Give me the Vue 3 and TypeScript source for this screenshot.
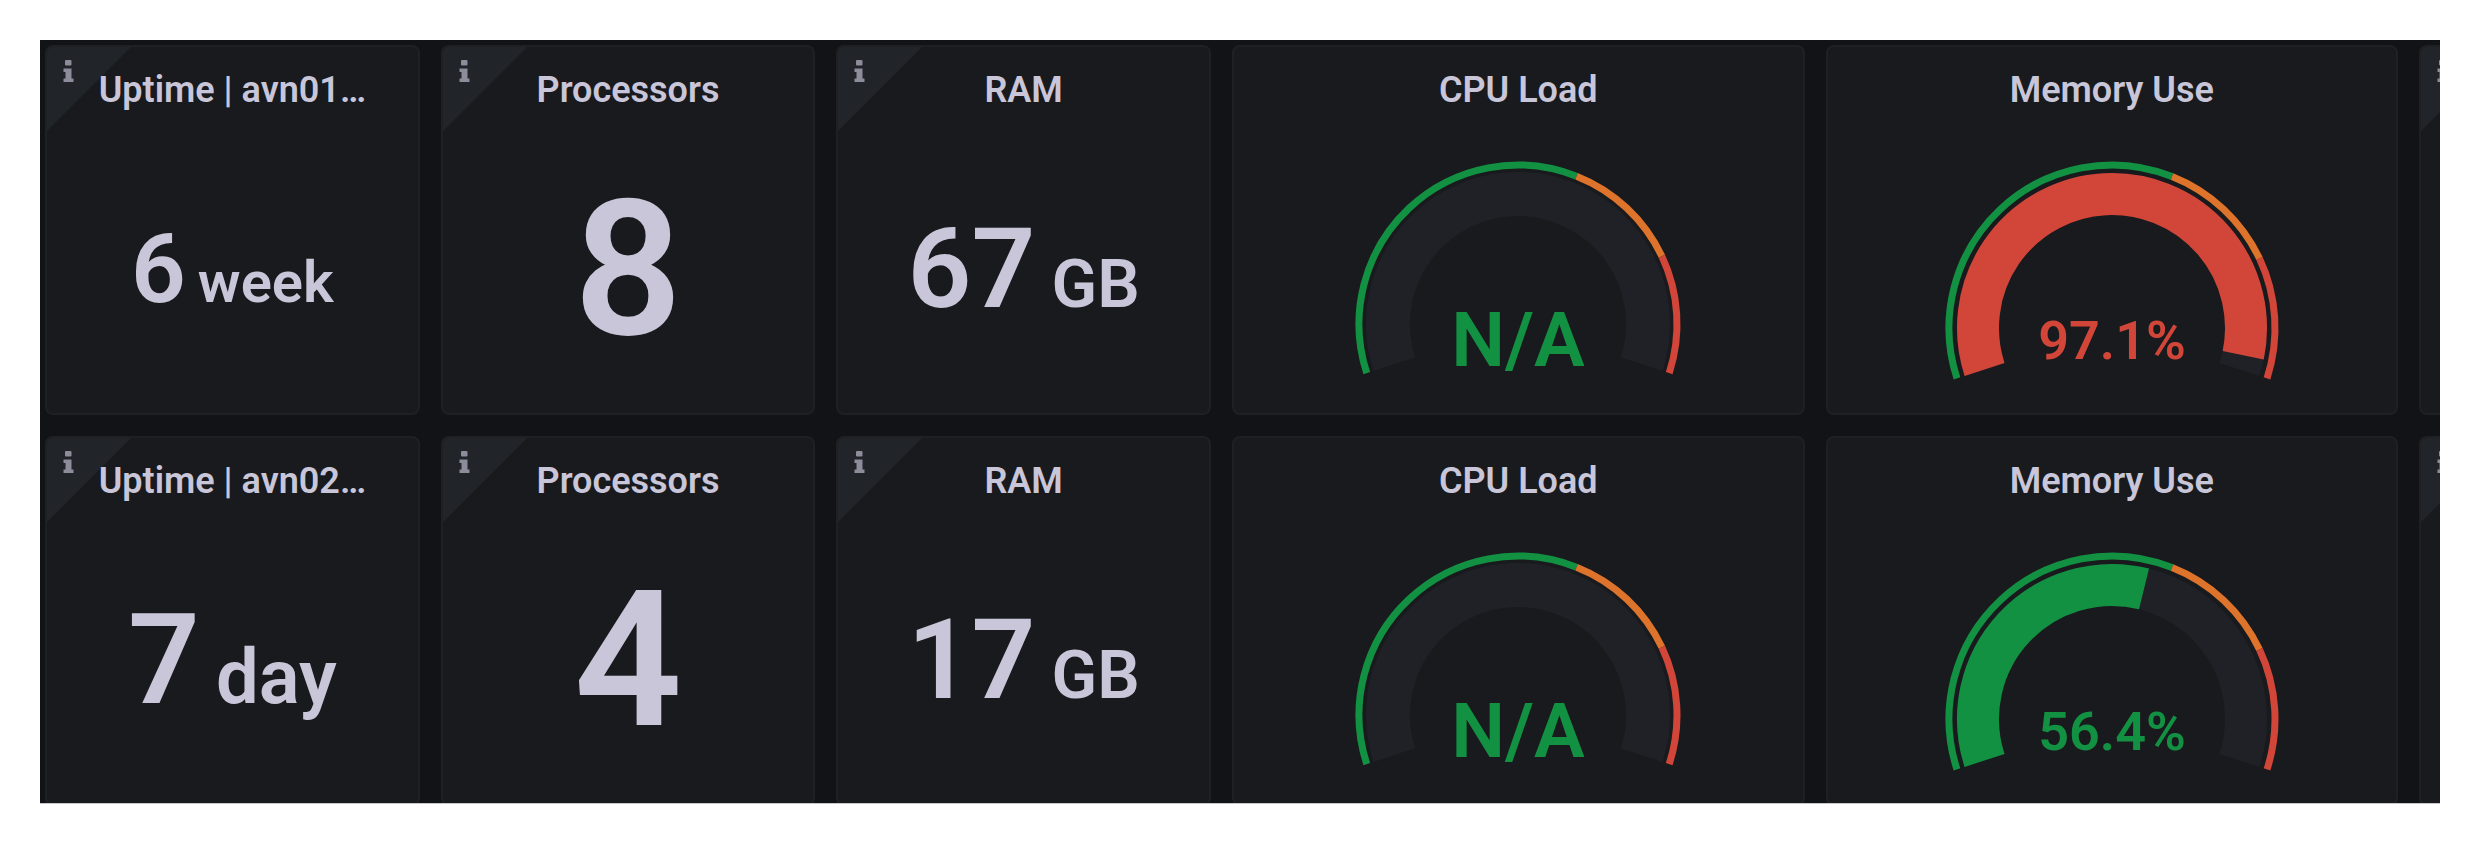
<script setup lang="ts">
interface StatPanel {
  kind: 'stat'
  title: string
  value: string
  unit?: string
  size: 'small' | 'medium' | 'large' | 'huge'
}

interface GaugePanel {
  kind: 'gauge'
  title: string
  text: string
  ratio: number
  color: string
  cy: number
  band: number
  outer: number
  inner: number
  fontSize: number
  baseline: number
}

interface EmptyPanel {
  kind: 'empty'
}

type Panel = StatPanel | GaugePanel | EmptyPanel

const GREEN = '#139142'
const ORANGE = '#de732c'
const RED = '#d24639'
const TRACK = '#202126'
const CX = 170

const thresholds = [
  { from: 0, to: 0.6, color: GREEN },
  { from: 0.6, to: 0.8, color: ORANGE },
  { from: 0.8, to: 1, color: RED },
]

function cpu(): GaugePanel {
  return {
    kind: 'gauge', title: 'CPU Load', text: 'N/A', ratio: 0, color: GREEN,
    cy: 191, band: 159, outer: 152, inner: 108, fontSize: 76, baseline: 233,
  }
}

function memory(percent: number, color: string): GaugePanel {
  return {
    kind: 'gauge', title: 'Memory Use', text: `${percent}%`, ratio: percent / 100, color,
    cy: 195, band: 163, outer: 155, inner: 113, fontSize: 54, baseline: 226,
  }
}

const rows: Panel[][] = [
  [
    { kind: 'stat', title: 'Uptime | avn01…', value: '6', unit: 'week', size: 'small' },
    { kind: 'stat', title: 'Processors', value: '8', size: 'huge' },
    { kind: 'stat', title: 'RAM', value: '67', unit: 'GB', size: 'medium' },
    cpu(),
    memory(97.1, RED),
    { kind: 'empty' },
  ],
  [
    { kind: 'stat', title: 'Uptime | avn02…', value: '7', unit: 'day', size: 'large' },
    { kind: 'stat', title: 'Processors', value: '4', size: 'huge' },
    { kind: 'stat', title: 'RAM', value: '17', unit: 'GB', size: 'medium' },
    cpu(),
    memory(56.4, GREEN),
    { kind: 'empty' },
  ],
]

// The dial sweeps 216 degrees, centred on twelve o'clock.
function point(ratio: number, radius: number, cy: number): string {
  const angle = ((ratio * 216 - 108) * Math.PI) / 180
  return `${(CX + radius * Math.sin(angle)).toFixed(2)} ${(cy - radius * Math.cos(angle)).toFixed(2)}`
}

function arc(from: number, to: number, radius: number, cy: number): string {
  const large = (to - from) * 216 > 180 ? 1 : 0
  return `M${point(from, radius, cy)}A${radius} ${radius} 0 ${large} 1 ${point(to, radius, cy)}`
}
</script>

<template>
  <div class="page">
    <main class="dashboard">
      <template v-for="(row, r) in rows" :key="r">
        <section v-for="(panel, c) in row" :key="c" class="panel" :class="{ cut: panel.kind === 'empty' }">
          <button v-if="panel.kind !== 'gauge'" class="info" type="button" aria-label="Panel description">
            <svg viewBox="0 0 84 84" aria-hidden="true">
              <path class="corner" d="M0 0H84L0 84Z" />
              <path class="glyph" d="M19 13h4.500q1 0 1 1v3.500q0 1-1 1h-4.500q-1 0-1-1V14q0-1 1-1zM16.500 21.500h8v10h2v3.500h-10v-3.500h2v-6.500h-2z" />
            </svg>
          </button>
          <template v-if="panel.kind !== 'empty'">
            <h2 class="title">{{ panel.title }}</h2>
            <p v-if="panel.kind === 'stat'" class="stat" :class="panel.size">
              <span>{{ panel.value }}</span><span v-if="panel.unit" class="unit">{{ panel.unit }}</span>
            </p>
            <div v-else class="gauge">
              <svg viewBox="0 0 340 272" role="img" :aria-label="panel.title">
                <path
                  :d="arc(0, 1, (panel.outer + panel.inner) / 2, panel.cy)"
                  :stroke="TRACK" :stroke-width="panel.outer - panel.inner" fill="none"
                />
                <path
                  v-if="panel.ratio > 0"
                  :d="arc(0, panel.ratio, (panel.outer + panel.inner) / 2, panel.cy)"
                  :stroke="panel.color" :stroke-width="panel.outer - panel.inner" fill="none"
                />
                <path
                  v-for="t in thresholds" :key="t.color"
                  :d="arc(t.from, t.to, panel.band, panel.cy)"
                  :stroke="t.color" stroke-width="7" fill="none"
                />
                <text :x="CX" :y="panel.baseline" :font-size="panel.fontSize" :fill="panel.color" text-anchor="middle">{{ panel.text }}</text>
              </svg>
            </div>
          </template>
        </section>
      </template>
    </main>
  </div>
</template>

<style>
body {
  margin: 0;
  background: #fff;
}
</style>

<style scoped>
.page {
  box-sizing: border-box;
  height: 100vh;
  padding: 40px;
  font-family: Roboto, "Liberation Sans", sans-serif;
  font-weight: 600;
  color: #c8c6d8;
}

.dashboard {
  box-sizing: border-box;
  height: 100%;
  padding: 5px 0 0 5px;
  display: grid;
  grid-template-columns:
    repeat(3, minmax(0, 375fr))
    repeat(2, minmax(0, 573fr))
    minmax(0, 21fr);
  grid-auto-rows: 370px;
  gap: 21px;
  overflow: hidden;
  background: #121317;
  border-bottom: 1px solid #c8c8ca;
}

.panel {
  box-sizing: border-box;
  position: relative;
  min-width: 0;
  display: flex;
  flex-direction: column;
  padding-bottom: 8px;
  overflow: hidden;
  background: #191a1d;
  border: 2px solid #1f2024;
  border-radius: 8px;
}

.panel.cut {
  min-width: 375px;
}

.info {
  position: absolute;
  top: 0;
  left: 0;
  width: 84px;
  height: 84px;
  padding: 0;
  border: 0;
  background: none;
}

.info svg {
  display: block;
}

.corner {
  fill: #212428;
}

.glyph {
  fill: #8c8c9a;
}

.title {
  position: relative;
  margin: 0;
  font-size: 36px;
  font-weight: 600;
  line-height: 86px;
  text-align: center;
  white-space: nowrap;
}

.stat {
  flex: 1;
  margin: 0;
  display: flex;
  align-items: baseline;
  justify-content: center;
  line-height: 272px;
}

.unit {
  line-height: 1;
}

.small { font-size: 96px; gap: 12px; }
.small .unit { font-size: 58px; }
.medium { font-size: 112px; gap: 16px; }
.medium .unit { font-size: 67px; }
.large { font-size: 126px; gap: 16px; }
.large .unit { font-size: 76px; }
.huge { font-size: 190px; }

.gauge {
  flex: 1;
  display: flex;
  justify-content: center;
}

.gauge svg {
  width: 340px;
  height: 272px;
}
</style>
